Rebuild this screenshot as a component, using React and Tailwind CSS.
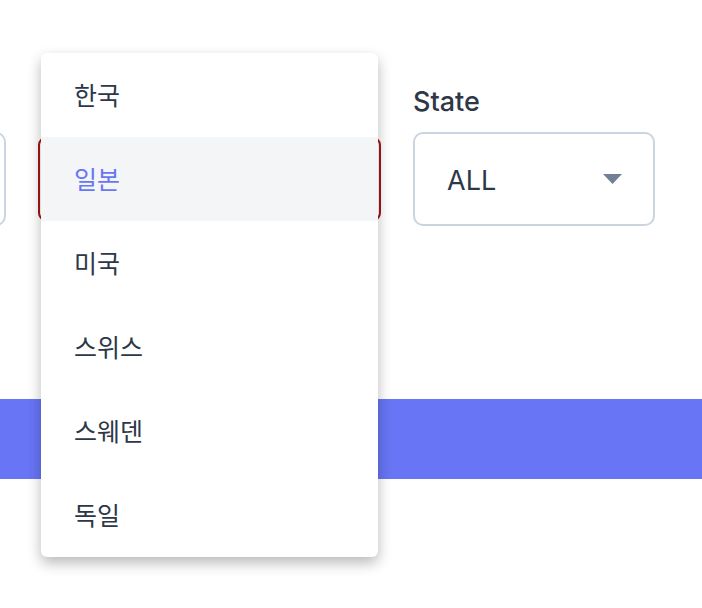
import React from 'react';

const countries = ['한국', '일본', '미국', '스위스', '스웨덴', '독일'];

const Caret = () => (
  <svg width="19" height="10" viewBox="0 0 19 10" className="shrink-0">
    <path d="M0 0 L19 0 L9.5 10 Z" fill="#718096" />
  </svg>
);

const SelectBox = ({ value }) => (
  <div className="h-[94px] border-2 border-[#cbd5e0] rounded-[10px] bg-white flex items-center justify-between pl-[32px] pr-[31px]">
    <span className="text-[27px] text-[#2d3748] pt-[4px]">{value}</span>
    <Caret />
  </div>
);

export default function App() {
  const selected = '일본';

  return (
    <div
      className="relative w-[702px] h-[608px] overflow-hidden bg-white"
      style={{ fontFamily: 'Inter, "Noto Sans CJK KR", sans-serif' }}
    >
      <div className="flex gap-[32px] pt-[86px] ml-[-236px]">
        {/* Region (scrolled off to the left) */}
        <div className="w-[242px] shrink-0 flex flex-col">
          <div className="h-[32px] mb-[14px]" />
          <div className="h-[94px] border-2 border-[#cbd5e0] rounded-[10px] bg-white" />
        </div>

        {/* Country, opened */}
        <div className="w-[343px] shrink-0 flex flex-col">
          <div className="h-[32px] mb-[14px]" />
          <div className="h-[94px] flex items-center">
            <div className="w-full h-[84px] border-2 border-[#a51616] rounded-[8px] bg-white" />
          </div>
        </div>

        {/* State */}
        <div className="w-[242px] shrink-0 flex flex-col">
          <label className="text-[27px] leading-[32px] font-medium text-[#2d3748] mb-[14px]">State</label>
          <SelectBox value="ALL" />
        </div>
      </div>

      <div className="mt-[173px] h-[80px] bg-[#6875f5]" />

      {/* dropdown menu */}
      <ul className="absolute left-[41px] top-[53px] w-[337px] bg-white rounded-[6px] shadow-[0_6px_14px_rgba(0,0,0,0.28)] overflow-hidden">
        {countries.map((c) => (
          <li
            key={c}
            className={`h-[84px] flex items-center pl-[33px] pt-[3px] text-[25px] ${
              c === selected ? 'bg-[#f4f5f7] text-[#6875f5]' : 'text-[#2d3748]'
            }`}
          >
            {c}
          </li>
        ))}
      </ul>
    </div>
  );
}
